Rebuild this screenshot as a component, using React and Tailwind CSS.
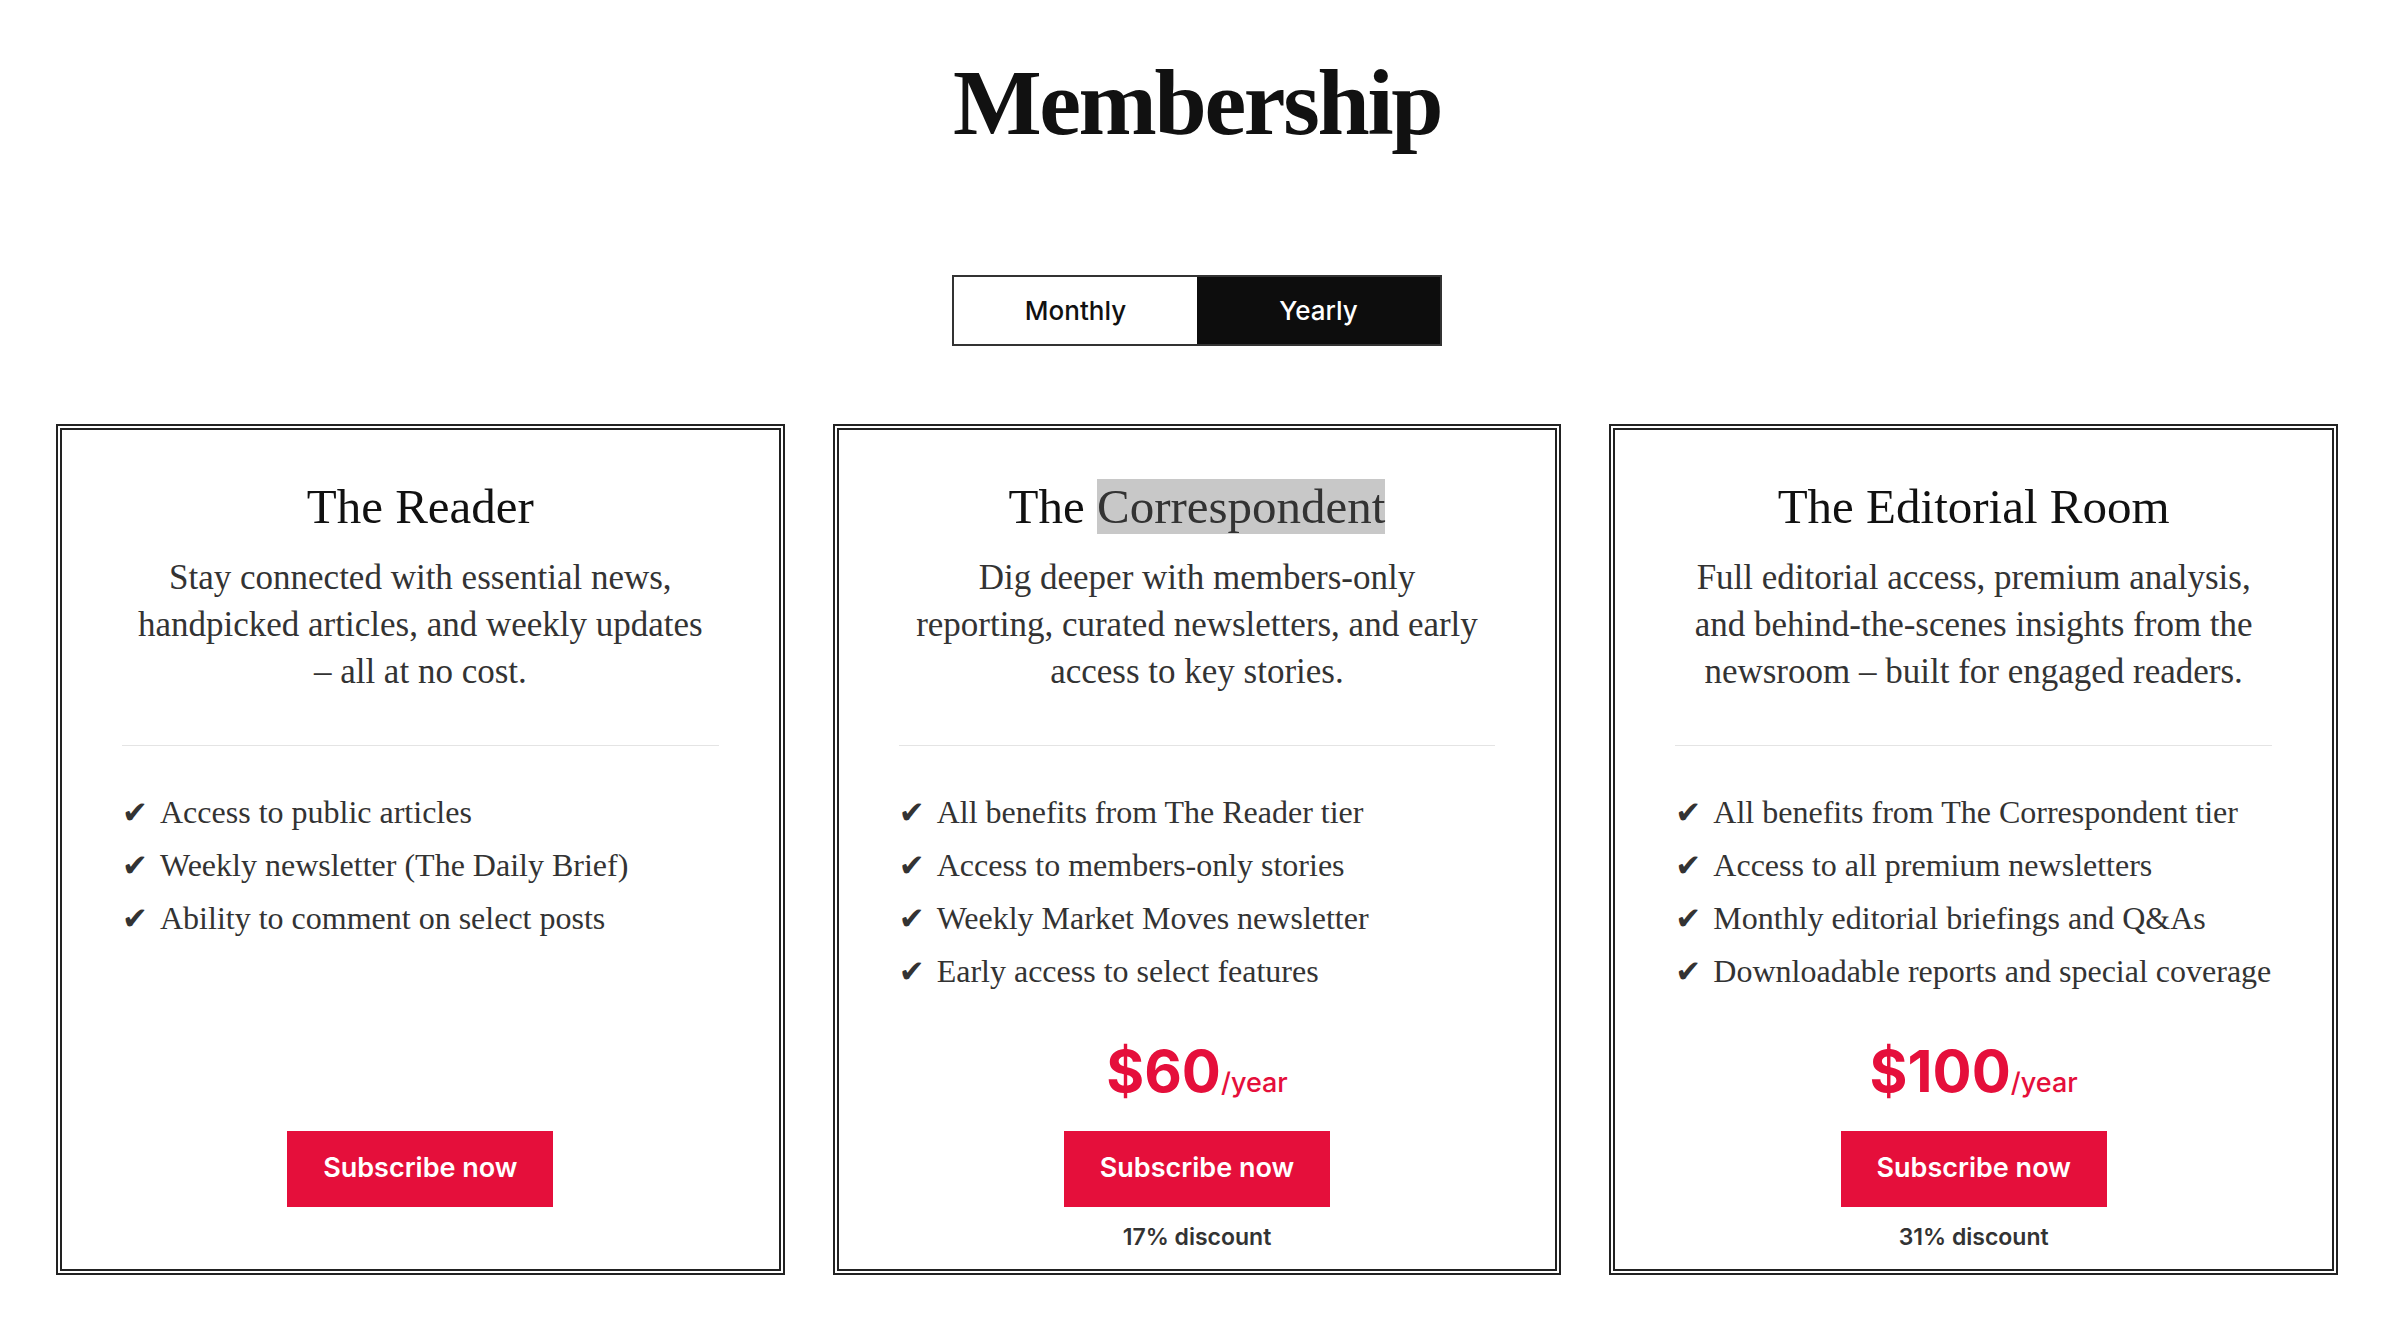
const plans = [
  {
    name: "The Reader",
    lines: [
      "Stay connected with essential news,",
      "handpicked articles, and weekly updates",
      "– all at no cost.",
    ],
    features: [
      "Access to public articles",
      "Weekly newsletter (The Daily Brief)",
      "Ability to comment on select posts",
    ],
    price: null,
    discount: null,
  },
  {
    name: "The Correspondent",
    highlight: true,
    lines: [
      "Dig deeper with members-only",
      "reporting, curated newsletters, and early",
      "access to key stories.",
    ],
    features: [
      "All benefits from The Reader tier",
      "Access to members-only stories",
      "Weekly Market Moves newsletter",
      "Early access to select features",
    ],
    price: "$60",
    discount: "17% discount",
  },
  {
    name: "The Editorial Room",
    lines: [
      "Full editorial access, premium analysis,",
      "and behind-the-scenes insights from the",
      "newsroom – built for engaged readers.",
    ],
    features: [
      "All benefits from The Correspondent tier",
      "Access to all premium newsletters",
      "Monthly editorial briefings and Q&As",
      "Downloadable reports and special coverage",
    ],
    price: "$100",
    discount: "31% discount",
  },
];

const serif = "font-['Liberation_Serif','Times_New_Roman',serif]";
const sans = "font-['Inter','Liberation_Sans',sans-serif]";

function PlanCard({ plan }) {
  return (
    <div className="flex flex-col border-[6px] border-double border-[#222] px-[60px] pt-[48px] pb-[17px] text-center">
      <h2 className={`${serif} text-[49px] leading-[58px] text-[#111]`}>
        {plan.highlight ? (
          <>
            The <span className="bg-[#c8c8c8] text-[#333]">Correspondent</span>
          </>
        ) : (
          plan.name
        )}
      </h2>
      <p className={`${serif} mt-[18px] text-[35px] leading-[47px] text-[#333]`}>
        {plan.lines.map((line, i) => (
          <span key={i} className="block whitespace-nowrap">
            {line}
          </span>
        ))}
      </p>

      <div className="mt-[50px] h-px bg-[#e4e4e4]" />

      <ul className={`${serif} mt-[40px] text-left text-[32px] leading-[53px] text-[#333]`}>
        {plan.features.map((f) => (
          <li key={f} className="flex items-center whitespace-nowrap">
            <span className="w-[38px] shrink-0 font-['DejaVu_Sans',sans-serif] text-[31px] leading-none text-[#333]">
              ✔
            </span>
            {f}
          </li>
        ))}
      </ul>

      <div className={`${sans} mt-auto flex flex-col items-center pt-[44px]`}>
        {plan.price && (
          <div className="mb-[27px] flex items-baseline text-[#e50f3b]">
            <span className="text-[58px] font-bold leading-[58px]">{plan.price}</span>
            <span className="text-[27px] font-medium">/year</span>
          </div>
        )}
        <button className="h-[76px] w-[266px] bg-[#e50f3b] text-[27px] font-semibold text-white">
          Subscribe now
        </button>
        <p className="mt-[15px] h-[30px] text-[23px] font-semibold leading-[30px] text-[#333]">
          {plan.discount || "\u00a0"}
        </p>
      </div>
    </div>
  );
}

export default function App() {
  return (
    <div className="min-h-screen bg-white px-[56px] pb-[58px]">
      <h1
        className={`${serif} pt-[55px] text-center text-[94px] font-bold leading-[94px] tracking-[-0.025em] text-[#111]`}
      >
        Membership
      </h1>

      <div className={`${sans} mx-auto mt-[126px] flex h-[71px] w-[490px] border-2 border-[#333] text-[26px] font-medium`}>
        <button className="flex-1 bg-white text-[#111]">Monthly</button>
        <button className="flex-1 bg-[#0d0d0d] text-white">Yearly</button>
      </div>

      <div className="mt-[78px] grid grid-cols-3 gap-[48px]">
        {plans.map((p) => (
          <PlanCard key={p.name} plan={p} />
        ))}
      </div>
    </div>
  );
}
